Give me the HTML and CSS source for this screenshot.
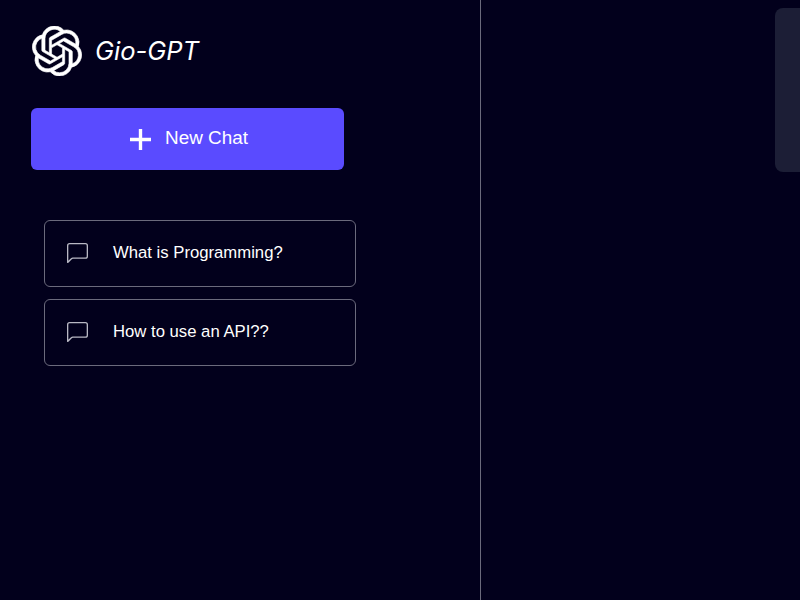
FILE: index.html
```html
<!DOCTYPE html>
<html lang="en">
<head>
<meta charset="utf-8">
<title>Gio-GPT</title>
<link rel="stylesheet" href="styles.css">
</head>
<body>
<div class="app">
  <aside class="sidebar">
    <div class="brand">
      <svg class="brand-logo" viewBox="0 0 24 24" fill="currentColor"><path d="M22.2819 9.8211a5.9847 5.9847 0 0 0-.5157-4.9108 6.0462 6.0462 0 0 0-6.5098-2.9A6.0651 6.0651 0 0 0 4.9807 4.1818a5.9847 5.9847 0 0 0-3.9977 2.9 6.0462 6.0462 0 0 0 .7427 7.0966 5.98 5.98 0 0 0 .511 4.9107 6.051 6.051 0 0 0 6.5146 2.9001A5.9847 5.9847 0 0 0 13.2599 24a6.0557 6.0557 0 0 0 5.7718-4.2058 5.9894 5.9894 0 0 0 3.9977-2.9001 6.0557 6.0557 0 0 0-.7475-7.0729zm-9.022 12.6081a4.4755 4.4755 0 0 1-2.8764-1.0408l.1419-.0804 4.7783-2.7582a.7948.7948 0 0 0 .3927-.6813v-6.7369l2.02 1.1686a.071.071 0 0 1 .038.052v5.5826a4.504 4.504 0 0 1-4.4945 4.4944zm-9.6607-4.1254a4.4708 4.4708 0 0 1-.5346-3.0137l.142.0852 4.783 2.7582a.7712.7712 0 0 0 .7806 0l5.8428-3.3685v2.3324a.0804.0804 0 0 1-.0332.0615L9.74 19.9502a4.4992 4.4992 0 0 1-6.1408-1.6464zM2.3408 7.8956a4.485 4.485 0 0 1 2.3655-1.9728V11.6a.7664.7664 0 0 0 .3879.6765l5.8144 3.3543-2.0201 1.1685a.0757.0757 0 0 1-.071 0l-4.8303-2.7865A4.504 4.504 0 0 1 2.3408 7.872zm16.5963 3.8558L13.1038 8.364 15.1192 7.2a.0757.0757 0 0 1 .071 0l4.8303 2.7913a4.4944 4.4944 0 0 1-.6765 8.1042v-5.6772a.79.79 0 0 0-.407-.667zm2.0107-3.0231l-.142-.0852-4.7735-2.7818a.7759.7759 0 0 0-.7854 0L9.409 9.2297V6.8974a.0662.0662 0 0 1 .0284-.0615l4.8303-2.7866a4.4992 4.4992 0 0 1 6.6802 4.66zM8.3065 12.863l-2.02-1.1638a.0804.0804 0 0 1-.038-.0567V6.0742a4.4992 4.4992 0 0 1 7.3757-3.4537l-.142.0805L8.704 5.459a.7948.7948 0 0 0-.3927.6813zm1.0976-2.3654l2.602-1.4998 2.6069 1.4998v2.9994l-2.5974 1.4997-2.6067-1.4997Z"/></svg>
      <span class="brand-name">Gio-GPT</span>
    </div>
    <button class="new-chat" type="button">
      <svg class="plus" viewBox="0 0 20 20"><path d="M10 0v20M0 10h20"/></svg>
      <span class="new-chat-label">New Chat</span>
    </button>
    <ul class="chats">
      <li class="chat">
        <svg class="chat-icon" viewBox="0 0 16 16" fill="currentColor"><path d="M14 1a1 1 0 0 1 1 1v8a1 1 0 0 1-1 1H4.414A2 2 0 0 0 3 11.586l-2 2V2a1 1 0 0 1 1-1h12zM2 0a2 2 0 0 0-2 2v12.793a.5.5 0 0 0 .854.353l2.853-2.853A1 1 0 0 1 4.414 12H14a2 2 0 0 0 2-2V2a2 2 0 0 0-2-2H2z"/></svg>
        <span class="chat-title">What is Programming?</span>
      </li>
      <li class="chat">
        <svg class="chat-icon" viewBox="0 0 16 16" fill="currentColor"><path d="M14 1a1 1 0 0 1 1 1v8a1 1 0 0 1-1 1H4.414A2 2 0 0 0 3 11.586l-2 2V2a1 1 0 0 1 1-1h12zM2 0a2 2 0 0 0-2 2v12.793a.5.5 0 0 0 .854.353l2.853-2.853A1 1 0 0 1 4.414 12H14a2 2 0 0 0 2-2V2a2 2 0 0 0-2-2H2z"/></svg>
        <span class="chat-title">How to use an API??</span>
      </li>
    </ul>
  </aside>
  <main class="main">
    <div class="panel"></div>
  </main>
</div>
</body>
</html>
```
FILE: styles.css
```css
* { box-sizing: border-box; }
html, body { margin: 0; height: 100%; }
body {
  background: #02001c;
  color: #fff;
  font-family: "Liberation Sans", Arial, sans-serif;
  overflow: hidden;
}
.app { display: flex; height: 600px; }
.sidebar {
  width: 481px;
  flex: none;
  padding: 26px 0 0 31px;
  border-right: 1px solid #6b6a7c;
}
.brand { display: flex; align-items: center; gap: 13px; height: 50px; padding-left: 1px; }
.brand-logo { width: 50px; height: 50px; flex: none; stroke: currentColor; stroke-width: .3; }
.brand-name { font-family: "Inter", sans-serif; font-style: italic; font-size: 25.5px; margin-bottom: 2px; }
.new-chat {
  display: flex;
  align-items: center;
  justify-content: center;
  gap: 14px;
  width: 313px;
  height: 62px;
  margin-top: 32px;
  padding: 0 0 0 3px;
  border: 0;
  border-radius: 6px;
  background: #5a4bff;
  color: #fff;
  font: 18.9px "Liberation Sans", Arial, sans-serif;
}
.new-chat-label { margin-bottom: 2px; }
.plus { width: 21px; height: 21px; flex: none; stroke: #fff; stroke-width: 3.2; fill: none; }
.chats {
  list-style: none;
  margin: 50px 0 0 13px;
  padding: 0;
  width: 312px;
  display: flex;
  flex-direction: column;
  gap: 12px;
}
.chat {
  display: flex;
  align-items: center;
  gap: 25px;
  height: 67px;
  padding-left: 22px;
  border: 1px solid #6b6a7c;
  border-radius: 6px;
  font-size: 16.7px;
}
.chat-title { margin-bottom: 2px; }
.chat-icon { width: 21px; height: 21px; flex: none; color: #b9b8c4; }
.main { flex: 1; display: flex; justify-content: flex-end; align-items: flex-start; padding-top: 8px; }
.panel {
  width: 25px;
  height: 164px;
  background: #1c1e36;
  border-radius: 8px 0 0 8px;
}
```
